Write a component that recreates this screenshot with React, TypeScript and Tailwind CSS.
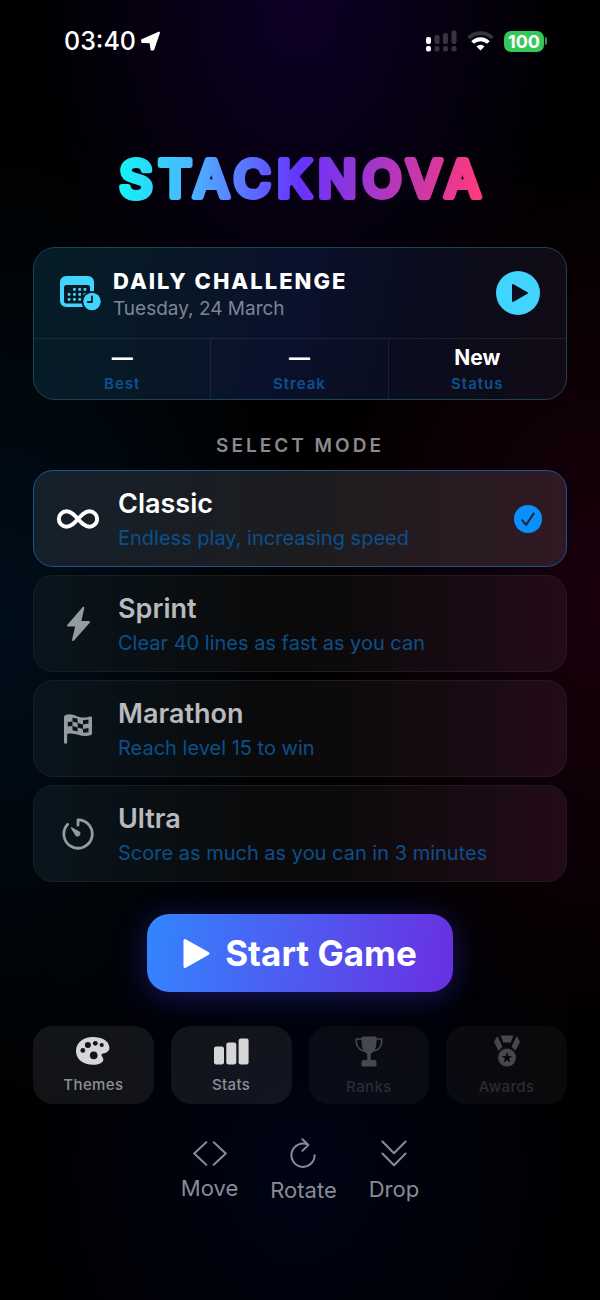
import React, { useState } from 'react';

const InfinityIcon = () => (
  <svg width="46" height="46" viewBox="0 0 24 24" fill="none" stroke="currentColor" strokeWidth="2.1" strokeLinecap="round" aria-hidden="true">
    <path d="M6 16c5 0 7-8 12-8a4 4 0 0 1 0 8c-5 0-7-8-12-8a4 4 0 1 0 0 8" />
  </svg>
);

const BoltIcon = () => (
  <svg width="25" height="36" viewBox="0 0 25 36" fill="currentColor" stroke="currentColor" strokeWidth="2" strokeLinejoin="round" aria-hidden="true">
    <path d="M17.3 1.8 2 19.6H10.4L7 34 23 16H14.2Z" />
  </svg>
);

const FlagIcon = () => (
  <svg width="28" height="30" viewBox="0 0 28 30" aria-hidden="true">
    <path
      fill="currentColor"
      fillRule="evenodd"
      d="M0 3Q0 1.4 1.6 .9C9-1.4 13 3.6 19 3.6 22.5 3.6 24.5 2.6 26.6 2.4Q28 2.3 28 3.8V19.4Q28 20.6 27 21C18 24.6 12 17.6 3.2 20V28.2A1.6 1.6 0 0 1 0 28.2Z
      M8.5 3.4V7.6L13.6 9V4.7Z M19 6.3V10.6L24.5 9.6V5.4Z M3.8 8V12.4L8.5 12V7.6Z M13.6 9V13.4L19 14.9V10.6Z M8.5 12V16.2L13.6 17.4V13.4Z M19 14.9V18.8L24.5 18.2V13.9Z"
    />
  </svg>
);

const TimerIcon = () => (
  <svg width="34" height="34" viewBox="0 0 34 34" fill="none" stroke="currentColor" strokeWidth="2.8" strokeLinecap="round" strokeLinejoin="round" aria-hidden="true">
    <path d="M17 8.2V2.8A14.2 14.2 0 1 1 6.6 7.4" />
    <path d="M10.4 10.9 18.6 15.3A2.5 2.5 0 0 1 15.3 18.7Z" fill="currentColor" strokeWidth="1.2" />
  </svg>
);

const CalendarClockIcon = () => (
  <svg width="42" height="36" viewBox="0 0 42 36" className="shrink-0" aria-hidden="true">
    <mask id="badge-gap">
      <rect width="42" height="36" fill="#fff" />
      <circle cx="32" cy="26.5" r="10.5" fill="#000" />
    </mask>
    <g fill="#40d4ff">
      <g mask="url(#badge-gap)">
        <path fillRule="evenodd" d="M6 1H28A6 6 0 0 1 34 7V26A6 6 0 0 1 28 32H6A6 6 0 0 1 0 26V7A6 6 0 0 1 6 1ZM6.5 10A2.5 2.5 0 0 0 4 12.5V26A2.5 2.5 0 0 0 6.5 28.5H27.5A2.5 2.5 0 0 0 30 26V12.5A2.5 2.5 0 0 0 27.5 10Z" />
        {[[13, 13], [18.3, 13], [23.6, 13], [7.7, 18], [13, 18], [18.3, 18], [23.6, 18], [7.7, 23], [13, 23], [18.3, 23]].map(([x, y]) => (
          <rect key={`${x}-${y}`} x={x} y={y} width="2.8" height="2.8" rx=".8" />
        ))}
      </g>
      <circle cx="32" cy="26.5" r="8.7" />
    </g>
    <path d="M32 21.5V27H27.8" fill="none" stroke="#07202f" strokeWidth="1.8" strokeLinecap="round" strokeLinejoin="round" />
  </svg>
);

const PaletteIcon = () => (
  <svg width="34" height="28" viewBox="0 0 34 28" aria-hidden="true">
    <mask id="palette-wells">
      <rect width="34" height="28" fill="#fff" />
      <circle cx="11.9" cy="8" r="3" />
      <circle cx="19.3" cy="6.3" r="2.4" />
      <circle cx="25.7" cy="8" r="2.1" />
      <circle cx="6.8" cy="13.4" r="2.4" />
      <circle cx="17.7" cy="18.4" r="3.8" />
    </mask>
    <path mask="url(#palette-wells)" fill="currentColor" d="M17 0C26 0 33 4 33.4 10.5 33.6 14.5 30 16 27 16.6 25 17.2 25 18.4 26.5 20.2 29.5 24.4 24.5 27.8 17 27.8 7 27.8 0 22 0 14 0 6 7 0 17 0Z" />
  </svg>
);

const BarsIcon = () => (
  <svg width="35" height="27" viewBox="0 0 35 27" fill="currentColor" aria-hidden="true">
    <rect x="0" y="8.5" width="10" height="18" rx="2.2" />
    <rect x="12.3" y="4.5" width="10" height="22" rx="2.2" />
    <rect x="24.6" y="0.5" width="10" height="26" rx="2.2" />
  </svg>
);

const TrophyIcon = () => (
  <svg width="28" height="31" viewBox="0 0 28 31" aria-hidden="true">
    <path fill="currentColor" d="M8 .5H20Q21.8.5 21.7 2.4L21.3 8C21 13 18.6 16 15.8 18V24H19.5Q21.5 24 21.5 26V29Q21.5 30.5 20 30.5H8Q6.5 30.5 6.5 29V26Q6.5 24 8.5 24H12.2V18C9.4 16 7 13 6.7 8L6.3 2.4Q6.2.5 8 .5Z" />
    <path fill="none" stroke="currentColor" strokeWidth="1.6" strokeLinecap="round" strokeLinejoin="round" d="M6.5 3H1.2C.8 9 3.5 14 9.5 15M21.5 3H26.8C27.2 9 24.5 14 18.5 15" />
  </svg>
);

const MedalIcon = () => (
  <svg width="26" height="32" viewBox="0 0 26 32" aria-hidden="true">
    <path fill="currentColor" d="M6.6.5H19.4L16.7 7.4H9.3Z M3.4 1 .3 6.3Q0 6.9.3 7.5L4.6 15.8 8.4 11.8Z M22.6 1 25.7 6.3Q26 6.9 25.7 7.5L21.4 15.8 17.6 11.8Z" />
    <path
      fill="currentColor"
      fillRule="evenodd"
      d="M13 13.6A9 9 0 1 1 13 31.6 9 9 0 1 1 13 13.6ZM13 17.2 14.4 21 18.4 21.2 15.2 23.6 16.3 27.5 13 25.3 9.7 27.5 10.8 23.6 7.6 21.2 11.6 21Z"
    />
  </svg>
);

const MoveIcon = () => (
  <svg width="34" height="25" viewBox="0 0 34 25" fill="none" stroke="currentColor" strokeWidth="2" strokeLinecap="round" strokeLinejoin="round" aria-hidden="true">
    <path d="M13.3 1.3 1.2 12.5 13.3 23.7M20.7 1.3 32.8 12.5 20.7 23.7" />
  </svg>
);

const RotateIcon = () => (
  <svg width="26" height="30" viewBox="0 0 26 30" fill="none" stroke="currentColor" strokeWidth="2" strokeLinecap="round" strokeLinejoin="round" aria-hidden="true">
    <path d="M24.6 17.2A11.6 11.6 0 1 1 18 6.8" />
    <path d="M12.4 1.2 18.4 6.9 12.4 12.9" />
  </svg>
);

const DropIcon = () => (
  <svg width="26" height="27" viewBox="0 0 26 27" fill="none" stroke="currentColor" strokeWidth="2" strokeLinecap="round" strokeLinejoin="round" aria-hidden="true">
    <path d="M1.4 1.5 13 13.3 24.6 1.5M1.4 13.5 13 25.3 24.6 13.5" />
  </svg>
);

const stats = [
  { label: 'Best', value: '—' },
  { label: 'Streak', value: '—' },
  { label: 'Status', value: 'New' },
];

const modes = [
  { id: 'classic', name: 'Classic', description: 'Endless play, increasing speed', Icon: InfinityIcon },
  { id: 'sprint', name: 'Sprint', description: 'Clear 40 lines as fast as you can', Icon: BoltIcon },
  { id: 'marathon', name: 'Marathon', description: 'Reach level 15 to win', Icon: FlagIcon },
  { id: 'ultra', name: 'Ultra', description: 'Score as much as you can in 3 minutes', Icon: TimerIcon },
];

const links = [
  { label: 'Themes', Icon: PaletteIcon, enabled: true },
  { label: 'Stats', Icon: BarsIcon, enabled: true },
  { label: 'Ranks', Icon: TrophyIcon, enabled: false },
  { label: 'Awards', Icon: MedalIcon, enabled: false },
];

const hints = [
  { label: 'Move', Icon: MoveIcon },
  { label: 'Rotate', Icon: RotateIcon },
  { label: 'Drop', Icon: DropIcon },
];

function StatusBar() {
  return (
    <div className="flex h-6 items-center justify-between pr-5 pl-[31px]">
      <div className="flex items-center gap-1">
        <span className="text-[25px] leading-6 font-medium">03:40</span>
        <svg width="21" height="22" viewBox="0 0 21 22" fill="currentColor" stroke="currentColor" strokeWidth="2" strokeLinejoin="round" aria-hidden="true">
          <path d="M19 2.6 2 10.2 2.4 12 10.4 12.2 11.6 19.6 13.2 19.4Z" />
        </svg>
      </div>
      <div className="flex items-center">
        <svg width="31" height="22" viewBox="0 0 31 22" aria-hidden="true">
          <g fill="#fff">
            <rect x="0" y="7" width="5" height="7" rx="2" />
            <rect x="0" y="16" width="5" height="5.5" rx="2" />
          </g>
          <g fill="#36333f">
            <rect x="8.5" y="5" width="5" height="9" rx="2" />
            <rect x="17" y="3" width="5" height="11" rx="2" />
            <rect x="25.5" y="0.5" width="5" height="13.5" rx="2" />
            <rect x="8.5" y="16" width="5" height="5.5" rx="2" />
            <rect x="17" y="16" width="5" height="5.5" rx="2" />
            <rect x="25.5" y="16" width="5" height="5.5" rx="2" />
          </g>
        </svg>
        <svg className="ml-2.5" width="27" height="20" viewBox="0 0 27 20" fill="none" strokeWidth="3.8" aria-hidden="true">
          <path d="M1.6 6.9A17 17 0 0 1 25.4 6.9" stroke="#36333f" />
          <path d="M5.6 11.5A11.2 11.2 0 0 1 21.4 11.5" stroke="#fff" />
          <path d="M13.5 19.6 9.5 15.5A5.6 5.6 0 0 1 17.5 15.5Z" fill="#fff" />
        </svg>
        <span className="ml-2.5 flex h-[21px] w-10 items-center justify-center rounded-[7px] bg-[#34c759] text-[18px] leading-[21px] font-bold">100</span>
        <span className="ml-px h-2 w-[2px] rounded-r-full bg-[#2f9e4b]" />
      </div>
    </div>
  );
}

function Logo() {
  return (
    <h1 className="mt-[94px] flex justify-center" aria-label="STACKNOVA">
      <svg width="400" height="64" viewBox="0 0 400 64" aria-hidden="true">
        <defs>
          <linearGradient id="nova" gradientUnits="userSpaceOnUse" x1="20" y1="20" x2="380" y2="44">
            <stop offset="0" stopColor="#12f4f4" />
            <stop offset="0.2" stopColor="#4db4ff" />
            <stop offset="0.5" stopColor="#6633ff" />
            <stop offset="1" stopColor="#ff3a7c" />
          </linearGradient>
        </defs>
        <text
          x="203"
          y="50"
          textAnchor="middle"
          fill="url(#nova)"
          stroke="url(#nova)"
          strokeWidth="6"
          strokeLinejoin="round"
          className="font-['Inter',sans-serif] text-[51px] font-medium tracking-[6px]"
        >
          STACKNOVA
        </text>
      </svg>
    </h1>
  );
}

function DailyChallenge() {
  return (
    <section className="mt-9 overflow-hidden rounded-[22px] border border-[#1d4450] bg-[linear-gradient(100deg,#051d27_0%,#081726_25%,#0a112c_48%,#0a0d1e_70%,#110a14_100%)]">
      <div className="flex h-[90px] items-center px-[26px]">
        <CalendarClockIcon />
        <div className="ml-[11px] flex-1 pt-1">
          <h2 className="text-[22px] leading-7 font-extrabold tracking-[2px]">DAILY CHALLENGE</h2>
          <p className="text-[19px] leading-7 text-[#7d8595]">Tuesday, 24 March</p>
        </div>
        <button type="button" aria-label="Play daily challenge" className="flex size-11 items-center justify-center rounded-full bg-[#40d4ff] text-[#0b0f1e]">
          <svg width="18" height="20" viewBox="0 0 18 20" className="ml-1" fill="currentColor" stroke="currentColor" strokeWidth="2" strokeLinejoin="round" aria-hidden="true">
            <path d="M2 2V18L16 10Z" />
          </svg>
        </button>
      </div>
      <dl className="grid grid-cols-3 divide-x divide-white/8 border-t border-white/8">
        {stats.map((stat) => (
          <div key={stat.label} className="flex h-[60px] flex-col-reverse items-center justify-center pt-0.5">
            <dt className="text-[15px] leading-6 font-semibold tracking-[1px] text-[#0d5090]">{stat.label}</dt>
            <dd className="text-[21px] leading-7 font-bold">{stat.value}</dd>
          </div>
        ))}
      </dl>
    </section>
  );
}

export default function App() {
  const [mode, setMode] = useState('classic');

  return (
    <main className="min-h-screen bg-black bg-[radial-gradient(ellipse_45%_30%_at_50%_0%,#0e0026_0%,transparent_100%),radial-gradient(ellipse_50%_38%_at_0%_48%,#000e1a_0%,transparent_100%),radial-gradient(ellipse_50%_36%_at_100%_46%,#1a000c_0%,transparent_100%),radial-gradient(ellipse_50%_28%_at_50%_90%,#000414_0%,transparent_100%)] px-[33px] pt-[29px] pb-10 font-['Inter',sans-serif] text-white">
      <StatusBar />
      <Logo />
      <DailyChallenge />

      <fieldset className="mt-[34px]">
        <legend className="w-full text-center text-[19px] leading-6 font-semibold tracking-[3px] text-[#8b8892]">SELECT MODE</legend>
        <div className="mt-3 flex flex-col gap-2">
          {modes.map(({ id, name, description, Icon }) => {
            const selected = mode === id;
            return (
              <label
                key={id}
                className={`flex h-[97px] cursor-pointer items-center rounded-[20px] border pr-6 has-focus-visible:outline-2 ${
                  selected
                    ? 'border-[#15588f] bg-linear-to-r from-[#15202b] via-[#1c1c1f] to-[#301923]'
                    : 'border-[#1b1d20] bg-[linear-gradient(90deg,#08151d_0%,#0a0a0b_42%,#0d0a0c_60%,#230b18_100%)]'
                }`}
              >
                <input type="radio" name="mode" value={id} checked={selected} onChange={() => setMode(id)} className="sr-only" />
                <span className={`flex w-[84px] justify-center pl-1 ${selected ? 'text-white' : 'text-[#949ba3]'}`}>
                  <Icon />
                </span>
                <span className="flex-1 pt-0.5">
                  <span className={`block text-[27px] leading-9 font-semibold ${selected ? 'text-white' : 'text-[#b9babd]'}`}>{name}</span>
                  <span className="block text-[20px] leading-8 text-[#0c4f8a]">{description}</span>
                </span>
                {selected && (
                  <svg width="28" height="28" viewBox="0 0 28 28" fill="none" aria-hidden="true">
                    <circle cx="14" cy="14" r="14" fill="#0a8fff" />
                    <path d="M8.2 15.2 12 20 19.6 8.6" stroke="#1c2433" strokeWidth="2" strokeLinecap="round" strokeLinejoin="round" />
                  </svg>
                )}
              </label>
            );
          })}
        </div>
      </fieldset>

      <button
        type="button"
        className="mx-auto mt-8 flex h-[78px] items-center gap-3.5 rounded-[22px] bg-[linear-gradient(100deg,#3385ff,#6a2fe0)] px-9 text-[35px] font-bold shadow-[0_4px_32px_rgba(64,60,255,0.35)]"
      >
        <svg width="28" height="31" viewBox="0 0 28 31" fill="currentColor" stroke="currentColor" strokeWidth="3" strokeLinejoin="round" aria-hidden="true">
          <path d="M2 2.5V28.5L25 15.5Z" />
        </svg>
        Start Game
      </button>

      <nav className="mt-[34px] grid grid-cols-4 gap-[17px]">
        {links.map(({ label, Icon, enabled }) => (
          <button
            key={label}
            type="button"
            disabled={!enabled}
            className="flex h-[78px] flex-col items-center justify-center gap-2 rounded-[20px] bg-white/7 pt-1 disabled:bg-white/4"
          >
            <span className={enabled ? 'text-[#d6d6d9]' : 'text-[#47474e]'}>
              <Icon />
            </span>
            <span className={`text-[15px] leading-6 font-medium tracking-wide ${enabled ? 'text-[#8e8f95]' : 'text-[#2c2c33]'}`}>{label}</span>
          </button>
        ))}
      </nav>

      <div className="mt-[34px] flex items-center justify-center gap-8 text-[#8a8b95]">
        {hints.map(({ label, Icon }) => (
          <div key={label} className="flex flex-col items-center gap-1.5">
            <Icon />
            <span className="text-[22px] leading-8">{label}</span>
          </div>
        ))}
      </div>
    </main>
  );
}
